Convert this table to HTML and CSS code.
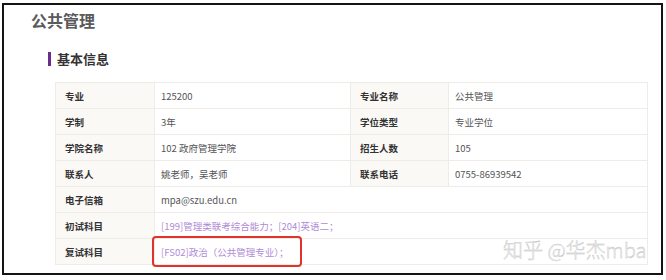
FILE: index.html
```html
<!DOCTYPE html>
<html lang="zh">
<head>
<meta charset="utf-8">
<title>公共管理</title>
<link rel="stylesheet" href="styles.css">
</head>
<body>
<div class="frame">
  <h1 class="title">公共管理</h1>
  <h2 class="section">基本信息</h2>
  <table class="info">
    <colgroup>
      <col class="c1"><col class="c2"><col class="c3"><col class="c4">
    </colgroup>
    <tr><th>专业</th><td>125200</td><th>专业名称</th><td>公共管理</td></tr>
    <tr><th>学制</th><td>3年</td><th>学位类型</th><td>专业学位</td></tr>
    <tr><th>学院名称</th><td>102 政府管理学院</td><th>招生人数</th><td>105</td></tr>
    <tr><th>联系人</th><td>姚老师，吴老师</td><th>联系电话</th><td>0755-86939542</td></tr>
    <tr><th>电子信箱</th><td colspan="3">mpa@szu.edu.cn</td></tr>
    <tr><th>初试科目</th><td colspan="3" class="link">[199]管理类联考综合能力；[204]英语二；</td></tr>
    <tr><th>复试科目</th><td colspan="3" class="link"><span class="mark">[FS02]政治（公共管理专业）；</span></td></tr>
  </table>
  <div class="watermark">知乎 @华杰mba</div>
</div>
</body>
</html>
```

FILE: styles.css
```css
html, body {
  margin: 0;
  padding: 0;
  background: #fff;
}
body {
  font-family: "Noto Sans CJK SC", "Noto Sans", sans-serif;
  padding: 3px 0 0 2px;
}
.frame {
  position: relative;
  width: 657px;
  height: 268px;
  border: 2px solid #141414;
  overflow: hidden;
}
.title {
  margin: 5px 0 0 27px;
  font-size: 16px;
  line-height: 20px;
  font-weight: bold;
  color: #5a5a5a;
}
.section {
  margin: 22px 0 0 44px;
  padding-left: 6px;
  border-left: 3px solid #6a2d8f;
  font-size: 13px;
  line-height: 14px;
  font-weight: bold;
  color: #333;
}
.info {
  margin: 16px 0 0 51px;
  border-collapse: collapse;
  width: 592px;
  table-layout: fixed;
  font-size: 9.5px;
}
.c1 { width: 99px; }
.c2 { width: 196px; }
.c3 { width: 98px; }
.c4 { width: 199px; }
.info th, .info td {
  height: 25px;
  padding: 0 0 0 9px;
  border: 1px solid #efece8;
  text-align: left;
  vertical-align: middle;
  line-height: 14px;
}
.info th {
  background: #fbf9f6;
  color: #333;
  font-weight: bold;
}
.info td {
  padding-left: 6px;
  color: #555;
}
.info td.link {
  color: #b08ad6;
}
.mark {
  position: relative;
}
.mark::after {
  content: "";
  position: absolute;
  left: -9px;
  top: -9px;
  width: 146px;
  height: 27px;
  border: 2px solid #e0332b;
  border-radius: 4px;
}
.watermark {
  position: absolute;
  left: 499px;
  top: 233px;
  font-size: 20px;
  line-height: 24px;
  font-weight: 300;
  color: #f6f6f6;
  -webkit-text-stroke: 0.4px #c2c2c2;
  white-space: nowrap;
}
```
